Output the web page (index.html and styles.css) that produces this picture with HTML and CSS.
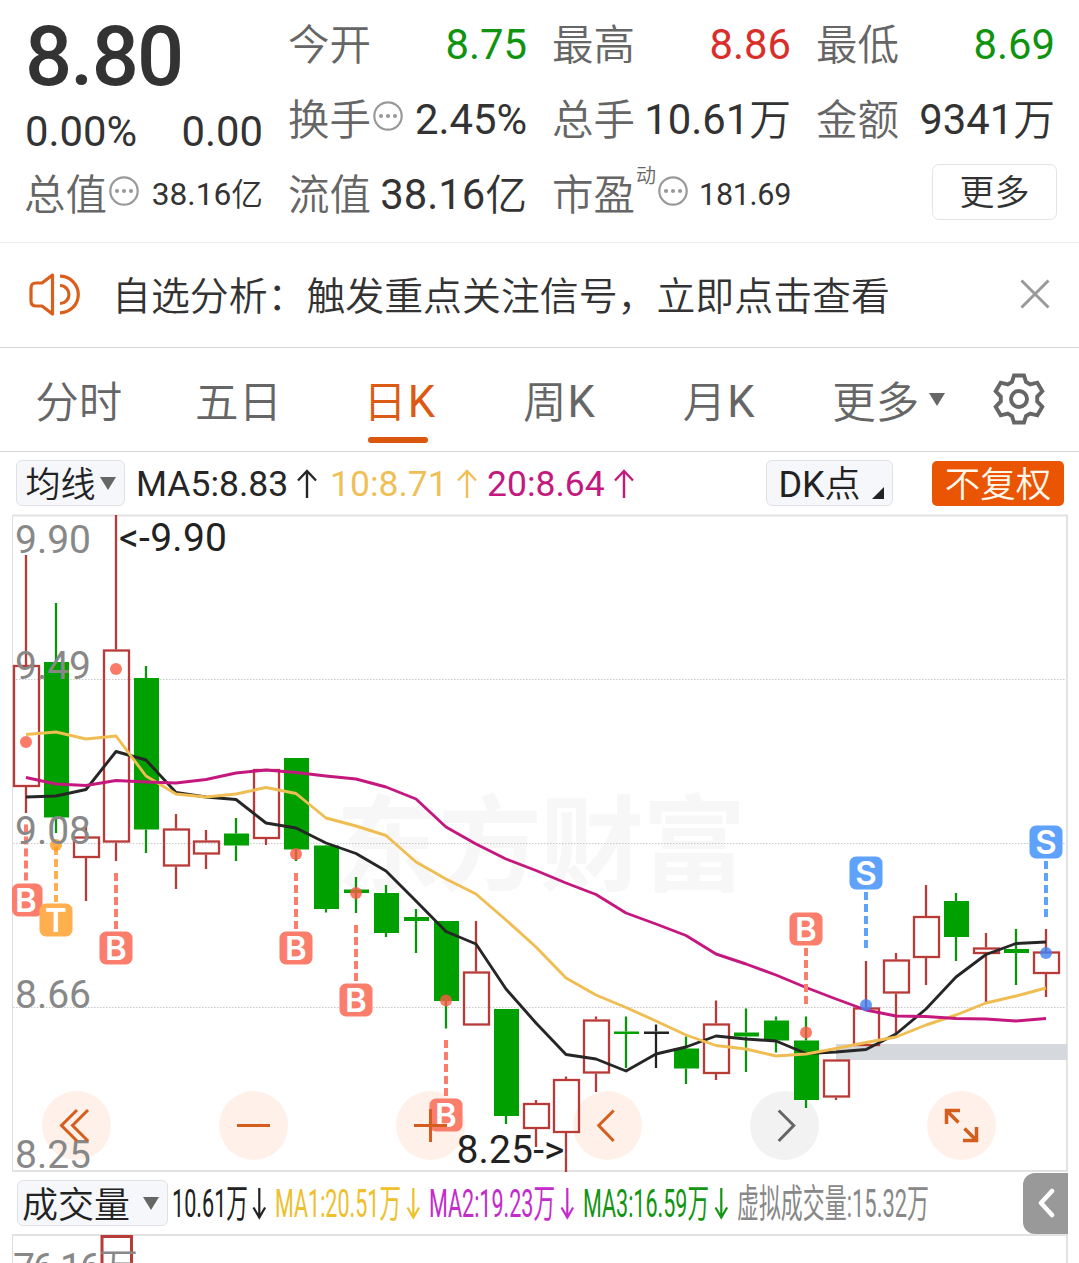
FILE: index.html
```html
<!DOCTYPE html>
<html lang="zh-CN">
<head>
<meta charset="utf-8">
<title>日K</title>
<link rel="stylesheet" href="styles.css">
</head>
<body>
<svg class="defs" width="0" height="0">
  <symbol id="more-dots" viewBox="0 0 30 30"><circle cx="15" cy="15" r="13.7" fill="none" stroke="#999" stroke-width="2.2"/><g fill="#999"><circle cx="8" cy="15" r="2.1"/><circle cx="15" cy="15" r="2.1"/><circle cx="22" cy="15" r="2.1"/></g></symbol>
  <symbol id="rise" viewBox="0 0 20 30"><path d="M10 29V2.500M1 11.500L10 2l9 9.500" fill="none" stroke="currentColor" stroke-width="2.400"/></symbol>
</svg>
<header class="quote">
  <section class="summary">
    <div class="price">8.80</div>
    <div class="change"><span>0.00%</span><span>0.00</span></div>
    <div class="cell"><span class="label">总值</span><svg class="dots"><use href="#more-dots"/></svg><span class="value small">38.16<b>亿</b></span></div>
  </section>
  <section class="stats">
    <div class="cell"><span class="label">今开</span><span class="value down">8.75</span></div>
    <div class="cell"><span class="label">最高</span><span class="value up">8.86</span></div>
    <div class="cell"><span class="label">最低</span><span class="value down">8.69</span></div>
    <div class="cell"><span class="label">换手</span><svg class="dots"><use href="#more-dots"/></svg><span class="value">2.45%</span></div>
    <div class="cell"><span class="label">总手</span><span class="value">10.61<b>万</b></span></div>
    <div class="cell"><span class="label">金额</span><span class="value">9341<b>万</b></span></div>
    <div class="cell"><span class="label">流值</span><span class="value">38.16<b>亿</b></span></div>
    <div class="cell"><span class="label">市盈</span><span class="sup">动</span><svg class="dots"><use href="#more-dots"/></svg><span class="value ratio">181.69</span></div>
    <div class="cell end"><button class="more">更多</button></div>
  </section>
</header>
<section class="notice">
  <svg width="54" height="48" viewBox="28 271 54 48" fill="none" stroke="#db5f1c" stroke-width="3.2"><path d="M52.500 275L42 283h-6q-5 0-5 5v13q0 5 5 5h6l10.500 8z" stroke-linejoin="round"/><path d="M60 285.500a9 9 0 0 1 0 18M60 276.200a18.300 18.300 0 0 1 0 36.600"/></svg>
  <p>自选分析：触发重点关注信号，立即点击查看</p>
  <svg width="30" height="30" viewBox="0 0 30 30" stroke="#999" stroke-width="3"><path d="M1.500 1.500l27 27M28.500 1.500l-27 27"/></svg>
</section>
<nav class="tabs">
  <a>分时</a><a>五日</a><a class="active">日<span>K</span></a><a>周<span>K</span></a><a>月<span>K</span></a><a>更多<svg class="caret" viewBox="0 0 16 13"><path d="M0 0h16l-8 13z"/></svg></a>
  <svg class="gear" width="56" height="56" viewBox="-28 -28 56 56" fill="none" stroke="#666" stroke-width="3.900"><path d="M-5-23.500H5L7-17l4.200 2.400 7.100-1.700 5 8.600-5.100 5.300v4.800l5.100 5.300-5 8.600-7.100-1.700L7 17 5 23.500H-5L-7 17l-4.200-2.400-7.100 1.700-5-8.600 5.100-5.300v-4.800l-5.100-5.300 5-8.600 7.100 1.700L-7-17z"/><circle r="8"/></svg>
</nav>
<section class="averages">
  <button class="chip ma"><b>均线</b><svg class="caret" viewBox="0 0 16 13"><path d="M0 0h16l-8 13z"/></svg></button>
  <span class="ma5">MA5:8.83<svg class="rise"><use href="#rise"/></svg></span><span class="ma10">10:8.71<svg class="rise"><use href="#rise"/></svg></span><span class="ma20">20:8.64<svg class="rise"><use href="#rise"/></svg></span>
  <button class="chip dk"><span>DK<b>点</b></span><svg width="12" height="12" viewBox="0 0 12 12"><path d="M12 0v12H0z" fill="#222"/></svg></button>
  <button class="adjust">不复权</button>
</section>
<svg class="chart" width="1079" height="658" viewBox="0 514 1079 658">
  <text class="watermark" x="336" y="883" textLength="410">东方财富</text>
  <g class="grid"><path d="M13 679.500H1067M13 843.500H1067M13 1007.500H1067"/></g>
  <path d="M12.500 515V1171" stroke="#ddd"/><path d="M12 515.500H1067V1171H12" fill="none" stroke="#e2e2e2" stroke-width="2"/>
  <rect x="836" y="1044" width="231" height="16" fill="#d5d9dd"/>
  <g fill="#fff1e9"><circle cx="76.500" cy="1125.500" r="34.500"/><circle cx="253.500" cy="1125.500" r="34.500"/><circle cx="430.500" cy="1125.500" r="34.500"/><circle cx="607.500" cy="1125.500" r="34.500"/><circle cx="784.500" cy="1125.500" r="34.500" fill="#f2f2f2"/><circle cx="961.500" cy="1125.500" r="34.500"/></g>
  <g id="candles"></g>
  <g class="line">
    <polyline id="ma5" stroke="#262626"/><polyline id="ma10" stroke="#efbd52"/><polyline id="ma20" stroke="#c4187e"/>
  </g>
  <g id="signals"></g>
  <g class="axis"><text x="15" y="552.500" textLength="76">9.90</text><text x="15" y="678.500" textLength="76">9.49</text><text x="15" y="843.500" textLength="76">9.08</text><text x="15" y="1008" textLength="76">8.66</text><text x="15" y="1168" textLength="76">8.25</text></g>
  <g class="extreme"><text x="119" y="551" textLength="108">&lt;-9.90</text><text x="456.500" y="1162.500" textLength="108">8.25-&gt;</text></g>
  <g fill="none" stroke="#d55e1e" stroke-width="3"><path d="M77 1110L61.500 1125.500 77 1141M88 1110L72.500 1125.500 88 1141M237 1125.500h33M414 1125.500h33M430.500 1109v33M613.700 1110.500l-15 15 15 15.500"/><path d="M778.700 1110.500l15 15-15 15.500" stroke="#666"/><path d="M960 1110.500h-13.500v13.500M947 1111l11.500 11.500M963 1140.500h13.500v-13.500M976 1140l-11.500-11.500" stroke-width="3.500"/></g>
</svg>
<section class="volume">
  <button class="chip vol"><b>成交量</b><svg class="caret" viewBox="0 0 16 13"><path d="M0 0h16l-8 13z"/></svg></button>
  <svg class="figures" width="770" height="60" viewBox="170 1173 770 60">
    <text x="172" y="1217" textLength="76" lengthAdjust="spacingAndGlyphs" fill="#222">10.61万</text>
    <text x="275" y="1217" textLength="126" lengthAdjust="spacingAndGlyphs" fill="#edc02c">MA1:20.51万</text>
    <text x="429" y="1217" textLength="126" lengthAdjust="spacingAndGlyphs" fill="#c32ccb">MA2:19.23万</text>
    <text x="583" y="1217" textLength="126" lengthAdjust="spacingAndGlyphs" fill="#149514">MA3:16.59万</text>
    <text x="737" y="1217" textLength="192" lengthAdjust="spacingAndGlyphs" fill="#888">虚拟成交量:15.32万</text>
    <g fill="none" stroke-width="2.200"><path d="M259.300 1188v29M253.500 1207.500l5.800 10 5.800-10" stroke="#222"/><path d="M413.300 1188v29M407.500 1207.500l5.800 10 5.800-10" stroke="#edc02c"/><path d="M567.300 1188v29M561.500 1207.500l5.800 10 5.800-10" stroke="#c32ccb"/><path d="M721.300 1188v29M715.500 1207.500l5.800 10 5.800-10" stroke="#149514"/></g>
  </svg>
  <button class="collapse"><svg width="18" height="30" viewBox="0 0 18 30"><path d="M15 3L4 15l11 12" fill="none" stroke="#fff" stroke-width="4.500" stroke-linecap="round" stroke-linejoin="round"/></svg></button>
</section>
<svg class="chart" width="1079" height="29" viewBox="0 1234 1079 29">
  <path d="M12.500 1235V1263" stroke="#ddd"/><path d="M12 1235H1067V1263" fill="none" stroke="#e2e2e2" stroke-width="2"/>
  <path d="M102 1263V1236.500H131.500V1263" fill="none" stroke="#b93b37" stroke-width="3"/>
  <text class="axis" x="13" y="1281" textLength="125">76.16<tspan font-weight="350">万</tspan></text>
</svg>
<script src="chart.js"></script>
</body>
</html>
```
FILE: styles.css
```css
* { box-sizing: border-box; }
body { margin: 0; width: 1079px; height: 1263px; overflow: hidden; background: #fff; color: #333; font-family: Roboto, "Noto Sans CJK SC", sans-serif; font-weight: 400; }
button { font: inherit; color: inherit; margin: 0; padding: 0; border: 0; background: none; display: flex; align-items: center; justify-content: center; }
b { font-family: "Noto Sans CJK SC", sans-serif; font-weight: 350; line-height: 1; }
svg { display: block; flex: none; }
.defs { height: 0; }
.quote { height: 243px; padding: 7px 24px 0 25px; display: flex; gap: 26px; border-bottom: 1px solid #ececec; }
.summary { width: 238px; display: flex; flex-direction: column; }
.price { height: 100px; line-height: 100px; font-size: 83px; font-weight: 500; letter-spacing: -1.800px; }
.change { height: 50px; line-height: 50px; font-size: 41.800px; display: flex; justify-content: space-between; }
.stats { flex: 1; display: grid; grid-template-columns: repeat(3, 238px); grid-auto-rows: 75px; column-gap: 26px; }
.cell { height: 75px; display: flex; align-items: center; white-space: nowrap; }
.label { font: 350 41.500px "Noto Sans CJK SC", sans-serif; line-height: 60px; color: #666; margin: 0 0 6px -1px; }
.value { margin-left: auto; font-size: 41.800px; line-height: 60px; }
.value b { vertical-align: -1px; }
.small { font-size: 31.700px; }
.ratio { font-size: 30.500px; letter-spacing: -.3px; }
.up { color: #d92f2b; }
.down { color: #109410; }
.dots { width: 30px; height: 30px; margin: 0 0 7px 2px; }
.sup { font-size: 20px; font-weight: 350; line-height: 24px; color: #666; margin: 0 0 38px 1px; }
.end { justify-content: flex-end; }
.more { width: 125px; height: 56px; border: 1.500px solid #e4e4e4; border-radius: 7px; font: 350 35px "Noto Sans CJK SC", sans-serif; padding-bottom: 5px; margin: 0 -2px 5px 0; }
.notice { height: 105px; display: flex; align-items: center; padding: 0 29px 0 28px; border-bottom: 1px solid #d8d8d8; }
.notice p { margin: 0 auto 5px 30px; font: 350 38.900px "Noto Sans CJK SC", sans-serif; }
.notice svg:last-child { margin-bottom: 2px; }
.tabs { height: 104px; display: flex; align-items: center; border-bottom: 1px solid #d8d8d8; color: #666; }
.tabs a { width: 159.700px; height: 103px; display: flex; align-items: center; justify-content: center; padding-right: 2px; font-size: 43.500px; font-weight: 350; position: relative; }
.tabs a span { font-weight: 400; margin: 6px -2px 0 1px; }
.tabs a:last-of-type { padding-left: 23px; gap: 10px; }
.active { color: #dc5a14; }
.active::after { content: ""; position: absolute; left: 49px; bottom: 8px; width: 60px; height: 6px; border-radius: 3px; background: #db560e; }
.caret { width: 16px; height: 13px; fill: #666; }
.gear { margin: 0 0 1px 33px; }
.averages { height: 62px; display: flex; align-items: center; padding: 0 15px 0 16px; font-size: 35.500px; line-height: 50px; white-space: nowrap; }
.averages > span { width: 157px; display: flex; align-items: center; gap: 9px; padding-top: 1px; }
.rise { width: 20px; height: 30px; }
.averages .ma5 { width: 194px; margin-left: 11px; margin-right: 1px; color: #262626; }
.averages .ma10 { color: #efbf58; margin-left: -1px; }
.averages .ma20 { color: #c4187e; }
.chip { height: 46px; border: 1.500px solid #e0e2e6; border-radius: 6px; background: #f6f7fa; color: #222; }
.ma { width: 109px; gap: 4px; font-size: 35px; }
.ma b { margin-bottom: 4px; }
.dk { width: 127px; margin-left: 122px; font-size: 36px; gap: 11px; padding-left: 3px; }
.dk > span { padding-top: 3px; }
.dk svg { margin-top: 20px; }
.adjust { width: 132px; height: 45px; margin-left: auto; border-radius: 5px; background: #ea5504; color: #fff8ec; font-size: 35.500px; font-weight: 350; padding-top: 4px; }
.chart { overflow: hidden; }
.watermark { font: 700 104px "Noto Sans CJK SC", sans-serif; fill: #f7f7f7; }
.grid path { stroke: #c9c9c9; stroke-width: 1; stroke-dasharray: 1.500 1.500; }
.line { fill: none; stroke-width: 2.900; stroke-linejoin: round; }
.axis { font-size: 39px; fill: #888; }
.extreme { font-size: 39px; fill: #222; }
.candle-up { stroke: #b93b37; stroke-width: 2.300; fill: none; }
.candle-down { stroke: #0b930b; stroke-width: 2.300; fill: #00a000; }
.candle-flat { stroke: #222; stroke-width: 2.300; fill: #222; }
.badge { font: 600 33px Inter, sans-serif; fill: #fff; text-anchor: middle; }
.volume { height: 62px; display: flex; align-items: center; padding: 0 11px 0 17px; }
.vol { width: 151px; font-size: 36px; gap: 13px; padding-right: 4px; }
.vol b { margin-bottom: 3px; }
.figures { margin-left: 2px; font-size: 38.500px; font-weight: 400; }
.collapse { width: 45px; height: 61px; margin-left: auto; border-radius: 12px 0 0 12px; background: #999; }
```
FILE: chart.js
```js
const NS = "http://www.w3.org/2000/svg";
const FIRST = 26, STEP = 30;

function add(parent, name, attrs, text) {
  const el = document.createElementNS(NS, name);
  for (const key in attrs) el.setAttribute(key, attrs[key]);
  if (text) el.textContent = text;
  parent.appendChild(el);
}

// direction, wick top, body top, body bottom, wick bottom
const candles = [
  ["up",555,665,787,813],["down",603,662,817.5,833],["up",826,836.5,858,901],["up",515,649.5,842.5,861],["down",666,678,829.5,853],
  ["up",814,828.5,866.5,889],["up",830,840.5,854.5,869],["down",818,833.5,845.5,861],["up",769,769,839,845],["down",758,758,849.5,861],
  ["down",845,845.5,909,912.5],["down",877,889.5,893,913],["down",885,893,933,937],["down",909,917,921,953],["down",921,921,1001,1028.5],
  ["up",921,971.5,1025.5,1025.5],["down",1009,1009,1116,1124],["up",1100,1103,1129,1147],["up",1076.5,1079,1133,1172],["up",1016.5,1019.5,1073.5,1092],
  ["down",1016.5,1031.5,1034,1068],["flat",1024.5,1031.5,1034,1068],["down",1036.5,1048.5,1068.5,1084],["up",1000.5,1023.5,1074,1080],["down",1008.5,1032.5,1036.5,1072],
  ["down",1016.5,1020.5,1040.5,1052.5],["down",1016.5,1040.5,1100,1108],["up",1059.5,1059.5,1097.5,1100],["up",961,1007.5,1046,1046],["up",953,959.5,993.5,1033],
  ["up",885,916,958,985],["down",893,901,937,961],["up",933,947.5,954,1002.5],["down",929,949,953,985],["up",929,951.5,974,997]
];
const layer = document.getElementById("candles");
candles.forEach(([dir, high, top, bottom, low], i) => {
  const x = FIRST + i * STEP;
  const g = document.createElementNS(NS, "g");
  g.setAttribute("class", "candle-" + dir);
  layer.appendChild(g);
  add(g, "path", { d: `M${x} ${high}V${top}M${x} ${bottom}V${low}` });
  if (dir === "up") add(g, "rect", { x: x - 12, y: top + 1, width: 25, height: bottom - top - 2 });
  else add(g, "rect", { x: x - 12, y: top, width: 25, height: bottom - top, stroke: "none" });
});

const averages = {
  ma5: [797,796,789.5,751.5,760,792.5,797,799.5,823,828,843,853.5,871,901,931.5,944,989,1023,1054.5,1059,1071,1054,1047,1036,1039,1041,1053.5,1052,1049.5,1034,1009,977,954.5,943.5,942],
  ma10: [734.5,732,739,736,776,794,797,794,787.5,793.5,818,826,835.5,862,879,894,920,947,978,995,1007.5,1021,1035,1045.5,1049,1056,1054,1048.5,1042.5,1037,1025,1015,1003,996,988],
  ma20: [777.5,784,785.5,780.5,782,783,779.5,773,770,772.5,776,779,787,799,827,844,859,870.5,883,894.5,913,924,935.5,954,964,975,987.5,999,1010,1016,1016.5,1018.5,1019,1021,1018.5]
};
for (const id in averages) {
  document.getElementById(id).setAttribute("points", averages[id].map((y, i) => `${FIRST + i * STEP},${y}`).join(" "));
}

// letter, x, badge centre, dash start, dash end, dot y
const signals = [
  ["B",26,900,824.5,882,742],["T",56,920,847,902,845],["B",116,948,873,930,669],["B",296,948,873,930,854],["B",356,1000,925,981,893],
  ["B",446,1115,1040,1096,1000.5],["B",806,929,948,1004,1032.5],["S",866,873,892,948,1005],["S",1046,842,861,917,953]
];
const colors = { B: ["#fb7d6c", "#fa5a44"], T: ["#ffaf4d", "#ff9a1a"], S: ["#5fa2fb", "#3f82f5"] };
const marks = document.getElementById("signals");
signals.forEach(([letter, x, y, from, to, dot]) => {
  const [fill, strong] = colors[letter];
  add(marks, "path", { d: `M${x} ${from}V${to}`, stroke: fill, "stroke-width": 4, "stroke-dasharray": "8 4" });
  add(marks, "circle", { cx: x, cy: dot, r: 6, fill: strong, opacity: .8 });
  const left = Math.max(12, x - 16.5);
  add(marks, "rect", { x: left, y: y - 16.5, width: x + 16.5 - left, height: 33, rx: 6.5, fill });
  add(marks, "text", { class: "badge", x, y: y + 12 }, letter);
});
```
